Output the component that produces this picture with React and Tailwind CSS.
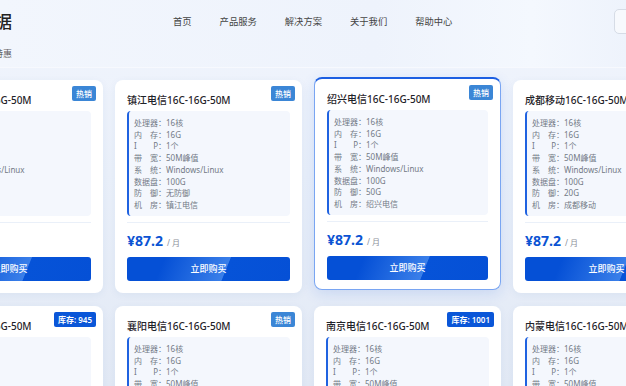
import React from 'react';

const row1 = [
    { name: '宿迁电信', defense: '无防御', room: '宿迁电信', badge: '热销' },
    { name: '镇江电信', defense: '无防御', room: '镇江电信', badge: '热销' },
    { name: '绍兴电信', defense: '50G', room: '绍兴电信', badge: '热销', active: true },
    { name: '成都移动', defense: '20G', room: '成都移动', badge: '热销' },
];

const row2 = [
    { name: '常州电信', defense: '无防御', room: '常州电信', stock: 945 },
    { name: '襄阳电信', defense: '无防御', room: '襄阳电信', badge: '热销' },
    { name: '南京电信', defense: '无防御', room: '南京电信', stock: 1001 },
    { name: '内蒙电信', defense: '无防御', room: '内蒙电信', badge: '热销' },
];

const navItems = ['首页', '产品服务', '解决方案', '关于我们', '帮助中心'];

function SpecLine({ label, value }) {
    return (
        <div className="flex whitespace-nowrap">
            <span className="inline-block w-[24px] [text-align-last:justify]">{label}</span>
            <span>：</span>
            <span>{value}</span>
        </div>
    );
}

function Card({ item }) {
    const specs = [
        ['处理器', '16核'],
        ['内 存', '16G'],
        ['I P', '1个'],
        ['带 宽', '50M峰值'],
        ['系 统', 'Windows/Linux'],
        ['数据盘', '100G'],
        ['防 御', item.defense],
        ['机 房', item.room],
    ];

    return (
        <div
            className={`relative w-[187px] h-[213px] shrink-0 rounded-[8px] bg-white px-[12px] pt-[13px] ${item.active
                ? 'border border-[#79a5f2] border-t-2 border-t-[#1d5fe2] -translate-y-[3px] shadow-[0_4px_14px_rgba(30,90,220,0.14)]'
                : 'shadow-[0_2px_8px_rgba(40,80,160,0.06)]'
                }`}
        >
            {item.stock ? (
                <span className="absolute top-[6px] right-[7px] h-[15px] px-[4px] rounded-[2px] bg-[#0a56d8] text-white text-[8px] font-semibold leading-[15px]">
                    库存: {item.stock}
                </span>
            ) : (
                <span className="absolute top-[6px] right-[7px] h-[15px] w-[24px] rounded-[2px] bg-[#3b86d6] text-white text-[8px] font-medium leading-[15px] text-center">
                    {item.badge}
                </span>
            )}

            <div className="text-[10px] leading-[14px] font-medium text-[#1f2329] whitespace-nowrap">
                {item.name}16C-16G-50M
            </div>

            <div className="mt-[4px] rounded-[4px] border-l-2 border-[#1f62e0] bg-[#f4f7fd] pl-[5px] pt-[6px] pb-[5px] text-[8px] leading-[11.7px] text-[#737a86]">
                {specs.map(([l, v]) => (
                    <SpecLine key={l} label={l} value={v} />
                ))}
            </div>

            <div className="mt-[6px] border-t border-[#eaf0f9] pt-[8px]">
                <div className="flex items-baseline h-[20px] leading-[20px]">
                    <span className="text-[14px] font-bold text-[#0b53d3]">¥87.2</span>
                    <span className="ml-[4px] text-[8px] text-[#8a8f99]">/ 月</span>
                </div>
                <button className="mt-[6px] w-full h-[24px] rounded-[3px] bg-[linear-gradient(112deg,#0550d6_22%,#3a7fe9_60%,#0653d8_60.5%,#0550d6_100%)] text-white text-[9px] font-medium">
                    立即购买
                </button>
            </div>
        </div>
    );
}

export default function App() {
    return (
        <div className="w-[626px] h-[386px] overflow-hidden bg-[linear-gradient(180deg,#f1f5fd_0%,#eaf0fa_45%,#e2e9f5_100%)] font-['Noto_Sans','Noto_Sans_CJK_SC',sans-serif]">
            {/* header */}
            <div className="flex items-start h-[68px] border-b border-[#f7f9fe] bg-[linear-gradient(90deg,#f2f6fd_0%,#eef3fc_60%,#f4f8fe_85%,#eef3fc_100%)]">
                <div className="shrink-0 ml-[-150px] w-[162px] text-right">
                    <div className="mt-[12px] text-[17px] leading-[20px] font-medium text-[#222]">产品数据</div>
                    <div className="mt-[16px] text-[9px] leading-[12px] text-[#666]">限时特惠</div>
                </div>
                <nav className="shrink-0 ml-[161px] mt-[15px] flex gap-[28px] text-[9.3px] leading-[14px] text-[#444]">
                    {navItems.map((n) => (
                        <span key={n}>{n}</span>
                    ))}
                </nav>
                <button className="shrink-0 ml-[162px] mt-[9px] w-[60px] h-[25px] rounded-[5px] border border-[#d6dce6] bg-[#f7f9fd] text-[9px] text-[#555]">
                    登录
                </button>
            </div>

            {/* cards */}
            <div className="ml-[-84px] pt-[12px] flex flex-col gap-[13px]">
                <div className="flex gap-[12px]">
                    {row1.map((c) => (
                        <Card key={c.name} item={c} />
                    ))}
                </div>
                <div className="flex gap-[12px]">
                    {row2.map((c) => (
                        <Card key={c.name} item={c} />
                    ))}
                </div>
            </div>
        </div>
    );
}
